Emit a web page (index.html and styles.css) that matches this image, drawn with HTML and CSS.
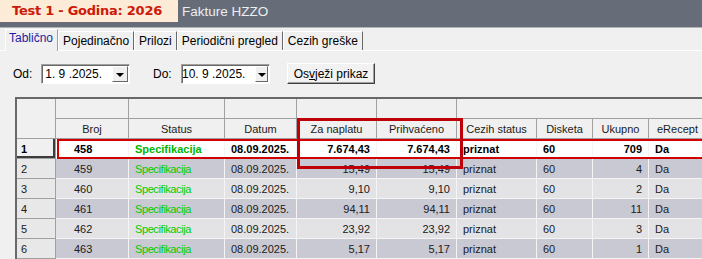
FILE: index.html
```html
<!DOCTYPE html>
<html lang="hr">
<head>
    <meta charset="UTF-8">
    <title>Fakture HZZO</title>
    <link rel="stylesheet" href="styles.css">
</head>
<body>
    <div class="titlebar">
        <div class="app-title">Test 1 - Godina: 2026</div>
        <div class="window-title">Fakture HZZO</div>
    </div>

    <div class="tabs">
        <div class="tab active">Tablično</div>
        <div class="tab">Pojedinačno</div>
        <div class="tab">Prilozi</div>
        <div class="tab">Periodični pregled</div>
        <div class="tab">Cezih greške</div>
    </div>

    <div class="filters">
        <span class="lbl lbl-od">Od:</span>
        <div class="combo">
            <span class="combo-text">1. 9 .2025.</span>
            <span class="drop"></span>
        </div>
        <span class="lbl lbl-do">Do:</span>
        <div class="combo">
            <span class="combo-text">10. 9 .2025.</span>
            <span class="drop"></span>
        </div>
        <button class="refresh">Os<u>v</u>ježi prikaz</button>
    </div>

    <div class="grid-wrap">
        <table class="grid">
            <colgroup>
                <col class="c-hdr">
                <col class="c-broj">
                <col class="c-status">
                <col class="c-datum">
                <col class="c-money">
                <col class="c-money">
                <col class="c-cezih">
                <col class="c-small">
                <col class="c-small">
                <col class="c-erecept">
            </colgroup>
            <thead>
                <tr class="band">
                    <th rowspan="2" class="corner"></th>
                    <th></th>
                    <th></th>
                    <th></th>
                    <th></th>
                    <th></th>
                    <th colspan="4"></th>
                </tr>
                <tr class="caps">
                    <th>Broj</th>
                    <th>Status</th>
                    <th>Datum</th>
                    <th>Za naplatu</th>
                    <th>Prihvaćeno</th>
                    <th>Cezih status</th>
                    <th>Disketa</th>
                    <th>Ukupno</th>
                    <th>eRecept</th>
                </tr>
            </thead>
            <tbody>
                <tr class="current">
                    <td class="rh">1</td>
                    <td class="broj">458</td>
                    <td class="status">Specifikacija</td>
                    <td>08.09.2025.</td>
                    <td class="num">7.674,43</td>
                    <td class="num">7.674,43</td>
                    <td>priznat</td>
                    <td>60</td>
                    <td class="num">709</td>
                    <td>Da</td>
                </tr>
                <tr class="dark">
                    <td class="rh">2</td>
                    <td class="broj">459</td>
                    <td class="status">Specifikacija</td>
                    <td>08.09.2025.</td>
                    <td class="num">15,49</td>
                    <td class="num">15,49</td>
                    <td>priznat</td>
                    <td>60</td>
                    <td class="num">4</td>
                    <td>Da</td>
                </tr>
                <tr class="light">
                    <td class="rh">3</td>
                    <td class="broj">460</td>
                    <td class="status">Specifikacija</td>
                    <td>08.09.2025.</td>
                    <td class="num">9,10</td>
                    <td class="num">9,10</td>
                    <td>priznat</td>
                    <td>60</td>
                    <td class="num">2</td>
                    <td>Da</td>
                </tr>
                <tr class="dark">
                    <td class="rh">4</td>
                    <td class="broj">461</td>
                    <td class="status">Specifikacija</td>
                    <td>08.09.2025.</td>
                    <td class="num">94,11</td>
                    <td class="num">94,11</td>
                    <td>priznat</td>
                    <td>60</td>
                    <td class="num">11</td>
                    <td>Da</td>
                </tr>
                <tr class="light">
                    <td class="rh">5</td>
                    <td class="broj">462</td>
                    <td class="status">Specifikacija</td>
                    <td>08.09.2025.</td>
                    <td class="num">23,92</td>
                    <td class="num">23,92</td>
                    <td>priznat</td>
                    <td>60</td>
                    <td class="num">3</td>
                    <td>Da</td>
                </tr>
                <tr class="dark">
                    <td class="rh">6</td>
                    <td class="broj">463</td>
                    <td class="status">Specifikacija</td>
                    <td>08.09.2025.</td>
                    <td class="num">5,17</td>
                    <td class="num">5,17</td>
                    <td>priznat</td>
                    <td>60</td>
                    <td class="num">1</td>
                    <td>Da</td>
                </tr>
            </tbody>
        </table>
        <!-- oznake preko tablice -->
        <div class="mark mark-row"></div>
        <div class="mark mark-cols"></div>
    </div>
</body>
</html>
```

FILE: styles.css
```css
:root {
    --face: #f0f0f0;
    --bar: #676c79;
    --line: #a0a0a0;
    --shadow: #696969;
    --red: #c00008;
}

* {
    box-sizing: border-box;
}

html, body {
    margin: 0;
    padding: 0;
}

body {
    width: 702px;
    height: 259px;
    overflow: hidden;
    background: var(--face);
    font-family: 'Liberation Sans', Arial, sans-serif;
    font-size: 12px;
    color: #000;
}

/* naslovna traka */
.titlebar {
    height: 28px;
    background: var(--bar);
    border-bottom: 1px solid #b4b4b4;
    display: flex;
    align-items: flex-start;
}

.app-title {
    width: 178px;
    height: 22px;
    line-height: 22px;
    padding-left: 12px;
    background: #fcebd6;
    color: #cc1a08;
    font-family: 'DejaVu Sans', Verdana, sans-serif;
    font-weight: bold;
    font-size: 13px;
    letter-spacing: -0.25px;
}

.window-title {
    padding-left: 4px;
    line-height: 24px;
    color: #eceef2;
    font-size: 13.5px;
}

/* kartice */
.tabs {
    height: 23px;
    padding: 3px 0 0 5px;
    display: flex;
    align-items: flex-end;
    border-bottom: 1px solid #fff;
}

.tab {
    height: 19px;
    padding: 0 4px;
    line-height: 18px;
    border-left: 1px solid #fff;
    border-top: 1px solid #fff;
    border-right: 1px solid var(--shadow);
    white-space: nowrap;
}

.tab.active {
    height: 22px;
    margin-bottom: -1px;
    padding: 0 4px 0 3px;
    line-height: 17px;
    color: #1c1ca0;
    border-right-color: #a0a0a0;
    background: var(--face);
}

/* filteri */
.filters {
    height: 46px;
    padding: 13px 0 0 13px;
    display: flex;
    align-items: flex-start;
}

.lbl {
    line-height: 20px;
}

.lbl-od {
    width: 28px;
}

.lbl-do {
    width: 28px;
    margin-left: 23px;
}

.combo {
    width: 89px;
    height: 20px;
    display: flex;
    background: #fff;
    border-top: 1px solid var(--line);
    border-left: 1px solid var(--line);
    border-right: 1px solid #fff;
    border-bottom: 1px solid #fff;
    box-shadow: inset 1px 1px 0 var(--shadow);
}

.combo-text {
    flex: 1;
    padding-right: 10px;
    line-height: 18px;
    text-align: right;
    white-space: nowrap;
}

.drop {
    width: 16px;
    margin: 1px 1px 1px 0;
    background: var(--face);
    border-top: 1px solid #fff;
    border-left: 1px solid #fff;
    border-right: 1px solid var(--shadow);
    border-bottom: 1px solid var(--shadow);
    display: flex;
    align-items: center;
    justify-content: center;
}

.drop::after {
    content: "";
    border-left: 4px solid transparent;
    border-right: 4px solid transparent;
    border-top: 4px solid #000;
    margin-top: 1px;
}

.refresh {
    margin: -1px 0 0 17px;
    width: 88px;
    height: 21px;
    padding: 0;
    font-family: inherit;
    font-size: 12px;
    color: #000;
    background: #f2f2f2;
    border-top: 1px solid #fff;
    border-left: 1px solid #fff;
    border-right: 1px solid #404040;
    border-bottom: 1px solid #404040;
    box-shadow: inset -1px -1px 0 var(--line);
}

/* tablica */
.grid-wrap {
    position: relative;
    margin-left: 15px;
    border-left: 2px solid var(--shadow);
    border-top: 2px solid var(--shadow);
    width: 700px;
}

.grid {
    table-layout: fixed;
    border-collapse: separate;
    border-spacing: 0;
    width: 690px;
    font-size: 11px;
}

.c-hdr { width: 39px; }
.c-broj { width: 73px; }
.c-status { width: 96px; }
.c-datum { width: 72px; }
.c-money { width: 80px; }
.c-cezih { width: 80px; }
.c-small { width: 56px; }
.c-erecept { width: 58px; }

.grid th,
.grid td {
    height: 20px;
    padding: 0 6px;
    border-right: 1px solid var(--line);
    border-bottom: 1px solid var(--line);
    white-space: nowrap;
    overflow: hidden;
    text-align: left;
}

.grid th {
    background: var(--face);
    font-weight: normal;
    color: #1a1a1a;
    text-align: center;
}

.grid td {
    color: #202020;
    border-right-color: #f4f4f4;
    border-bottom-color: #f4f4f4;
}

.grid td.rh {
    padding-left: 4px;
    background: #e8e8e8;
    border-right-color: var(--line);
    border-bottom-color: var(--line);
}

.grid td.broj {
    padding-left: 18px;
}

.grid td.num {
    text-align: right;
}

.grid td.status {
    color: #00cc00;
    letter-spacing: -0.4px;
}

.dark td {
    background: #c9c9d3;
}

.light td {
    background: #e3e3e6;
}

.current td {
    background: #fff;
    font-weight: bold;
    color: #000;
}

.current td.rh {
    background: var(--face);
    box-shadow: inset -2px -2px 0 #3c3c3c;
}

.current td.status {
    color: #00b400;
    letter-spacing: 0;
}

.mark {
    position: absolute;
    pointer-events: none;
}

.mark-row {
    left: 40px;
    top: 40px;
    width: 720px;
    height: 20px;
    border: 2px solid #d00000;
}

.mark-cols {
    left: 280px;
    top: 19px;
    width: 166px;
    height: 51px;
    border: 3px solid var(--red);
}
```
